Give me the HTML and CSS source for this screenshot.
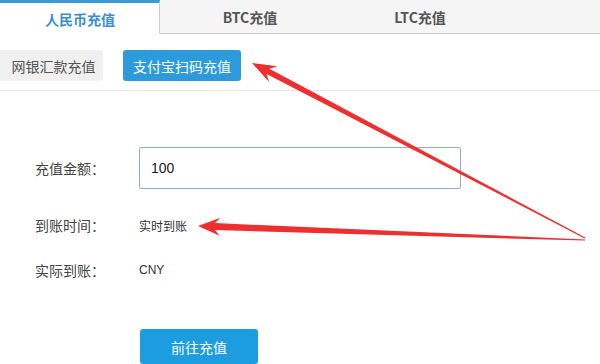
FILE: index.html
```html
<!DOCTYPE html>
<html lang="zh-CN">
<head>
<meta charset="utf-8">
<title>充值</title>
<link rel="stylesheet" href="styles.css">
</head>
<body>
<div class="page">
  <div class="tabs">
    <div class="tab tab-active">人民币充值</div>
    <div class="tab tab-btc">BTC充值</div>
    <div class="tab tab-ltc">LTC充值</div>
    <div class="tab-rest"></div>
  </div>
  <div class="subnav">
    <span class="sub-btn sub-gray">网银汇款充值</span>
    <span class="sub-btn sub-blue">支付宝扫码充值</span>
  </div>
  <div class="form">
    <div class="row row-input">
      <span class="label">充值金额：</span>
      <div class="input">100</div>
    </div>
    <div class="row row-text row-time">
      <span class="label">到账时间：</span>
      <span class="value">实时到账</span>
    </div>
    <div class="row row-text row-cny">
      <span class="label">实际到账：</span>
      <span class="value">CNY</span>
    </div>
    <div class="row row-btn">
      <span class="label"></span>
      <span class="submit">前往充值</span>
    </div>
  </div>
  <svg class="arrows" width="600" height="364" viewBox="0 0 600 364">
    <polygon fill="#ee2f2f" points="252,63 269.1,82.1 266.6,74.0 584.7,238.5 585.3,237.5 269.4,68.7 277.5,66.2"/>
    <polygon fill="#ee2f2f" points="198,226 219.7,235.8 214.9,230.1 585,240.6 585,239.4 215.1,223.1 220.3,217.8"/>
  </svg>
</div>
</body>
</html>
```
FILE: styles.css
```css
* { box-sizing: border-box; }
html, body { margin: 0; padding: 0; background: #fff; }
body {
  font-family: "Noto Sans CJK SC", "Noto Sans", sans-serif;
  color: #444;
  width: 600px;
  height: 364px;
  overflow: hidden;
}
.page { position: relative; width: 600px; height: 364px; }
.tabs { display: flex; height: 34px; }
.tab {
  display: flex;
  align-items: center;
  justify-content: center;
  font-size: 14px;
  font-weight: bold;
  color: #555;
  background: #f5f5f5;
  border-bottom: 1px solid #c9c9c9;
  line-height: 1;
}
.tab-active {
  width: 160px;
  background: #fff;
  color: #3b8fd0;
  border-top: 3px solid #3a9ad4;
  border-right: 1px solid #cfcfcf;
  border-bottom: none;
  padding-left: 1px;
}
.tab-btc { width: 180px; }
.tab-ltc { width: 160px; }
.tab-rest { flex: 1; background: #f5f5f5; border-bottom: 1px solid #c9c9c9; }
.subnav {
  display: flex;
  gap: 20px;
  padding-top: 16px;
  padding-bottom: 9px;
  border-bottom: 1px solid #e6e6e6;
}
.sub-btn {
  height: 31px;
  display: flex;
  align-items: center;
  justify-content: center;
  font-size: 14px;
  border-radius: 3px;
}
.sub-gray { width: 103px; background: #f0f0f0; color: #555; padding-left: 4px; border-radius: 0 3px 3px 0; }
.sub-blue { width: 118px; background: #2d9bdb; color: #fff; }
.form { padding-top: 56px; padding-left: 35px; }
.row { display: flex; align-items: center; }
.label { width: 104px; font-size: 14px; color: #444; }
.row-input { height: 42px; }
.input {
  width: 322px;
  height: 42px;
  border: 1px solid #8ea9ee;
  border-radius: 2px;
  padding-left: 11px;
  display: flex;
  align-items: center;
  font-family: "Liberation Sans", Arial, sans-serif;
  font-size: 14px;
  color: #222;
}
.row-text { height: 20px; }
.row-time { margin-top: 26px; }
.row-cny { margin-top: 25px; }
.value { font-size: 12px; color: #333; font-family: "Liberation Sans", "Noto Sans CJK SC", sans-serif; }
.row-btn { margin-top: 49px; }
.submit {
  margin-left: 1px;
  width: 118px;
  height: 35px;
  background: #1b9de0;
  color: #fff;
  font-size: 14px;
  border-radius: 3px;
  display: flex;
  align-items: center;
  justify-content: center;
}
.arrows { position: absolute; left: 0; top: 0; pointer-events: none; }
```
